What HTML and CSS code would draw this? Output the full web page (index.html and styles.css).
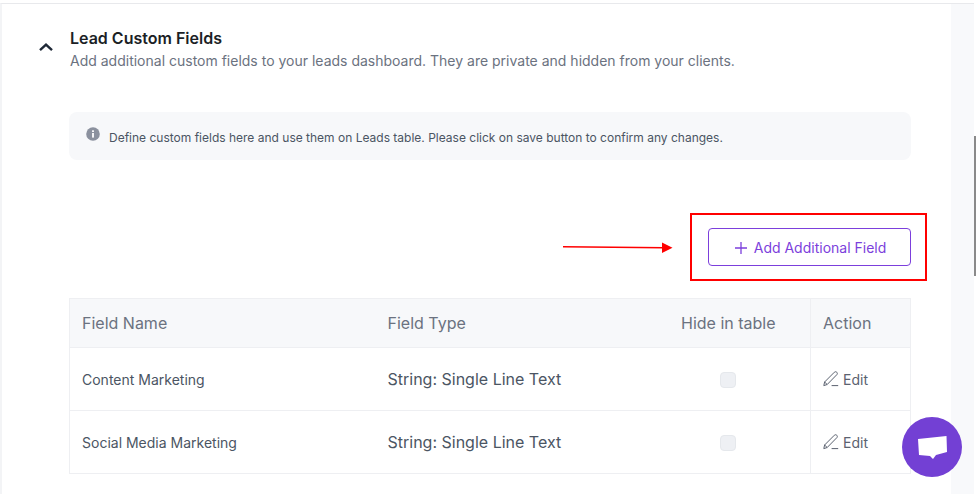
FILE: index.html
```html
<!DOCTYPE html>
<html lang="en">
<head>
    <meta charset="UTF-8">
    <title>Lead Custom Fields</title>
    <link rel="stylesheet" href="styles.css">
</head>
<body>
    <div class="page">
        <main class="panel">
            <header class="section-head">
                <button class="collapse" aria-label="Collapse">
                    <svg width="16" height="10" viewBox="0 0 16 10"><path d="M2 8.2 8 2.6l6 5.6" fill="none" stroke="#1f2937" stroke-width="2.4"/></svg>
                </button>
                <div>
                    <h1>Lead Custom Fields</h1>
                    <p>Add additional custom fields to your leads dashboard. They are private and hidden from your clients.</p>
                </div>
            </header>

            <div class="notice">
                <svg class="info" width="14" height="14" viewBox="0 0 14 14">
                    <circle cx="7" cy="7" r="6.8" fill="#8b919e"/>
                    <rect x="6.1" y="6" width="1.8" height="4.6" fill="#fff"/>
                    <rect x="6.1" y="3.3" width="1.8" height="1.7" fill="#fff"/>
                </svg>
                <span>Define custom fields here and use them on Leads table. Please click on save button to confirm any changes.</span>
            </div>

            <div class="actions">
                <button class="btn-add">
                    <svg width="12" height="12" viewBox="0 0 12 12"><path d="M6 0v12M0 6h12" stroke="#7c3fdc" stroke-width="1.3"/></svg>
                    Add Additional Field
                </button>
            </div>

            <table class="fields">
                <thead>
                    <tr>
                        <th class="col-name">Field Name</th>
                        <th class="col-type">Field Type</th>
                        <th class="col-hide">Hide in table</th>
                        <th class="col-action">Action</th>
                    </tr>
                </thead>
                <tbody>
                    <tr>
                        <td class="col-name">Content Marketing</td>
                        <td class="col-type">String: Single Line Text</td>
                        <td class="col-hide"><span class="check"></span></td>
                        <td class="col-action">
                            <a class="edit">
                                <svg width="16" height="16" viewBox="0 0 16 16"><path d="M.8 14.6 1.6 11 11.4 1.2c.7-.7 1.7-.6 2.4.1s.7 1.6.1 2.3L4.2 13.5.8 14.6ZM1.6 11l2.6 2.5M8.6 14.6h6.6" fill="none" stroke="#5b6270" stroke-width="1"/></svg>
                                Edit
                            </a>
                        </td>
                    </tr>
                    <tr>
                        <td class="col-name">Social Media Marketing</td>
                        <td class="col-type">String: Single Line Text</td>
                        <td class="col-hide"><span class="check"></span></td>
                        <td class="col-action">
                            <a class="edit">
                                <svg width="16" height="16" viewBox="0 0 16 16"><path d="M.8 14.6 1.6 11 11.4 1.2c.7-.7 1.7-.6 2.4.1s.7 1.6.1 2.3L4.2 13.5.8 14.6ZM1.6 11l2.6 2.5M8.6 14.6h6.6" fill="none" stroke="#5b6270" stroke-width="1"/></svg>
                                Edit
                            </a>
                        </td>
                    </tr>
                </tbody>
            </table>
        </main>
        <div class="gutter"></div>
        <div class="scrollbar"><span class="thumb"></span></div>
    </div>

    <!-- annotation drawn over the screenshot -->
    <div class="mark-box"></div>
    <svg class="mark-arrow" width="112" height="14" viewBox="0 0 112 14">
        <path d="M0 5.800 101 6.800" stroke="#f00" stroke-width="1.5"/>
        <path d="M99 1.500 109.500 6.800 99 12Z" fill="#f00"/>
    </svg>

    <button class="chat" aria-label="Open chat">
        <svg width="29" height="23" viewBox="0 0 29 23"><path d="M0 3 28.500 0 29 16 18 19l-3 4-3-3-11-1Z" fill="#fff"/></svg>
    </button>
</body>
</html>
```

FILE: styles.css
```css
* {
    box-sizing: border-box;
}
html, body {
    height: 100%;
}
body {
    margin: 0;
    background-color: #fff;
    font-family: Inter, "Liberation Sans", sans-serif;
    overflow: hidden;
}
.page {
    display: flex;
    height: 494px;
    padding-top: 3px;
    background-color: #fff;
}
.panel {
    width: 951px;
    flex: none;
    border-top: 1px solid #e8e9ec;
    border-left: 2px solid #f3f4f6;
    padding: 24px 40px 0 67px;
}
.gutter {
    flex: 1;
    background-color: #f8f9fb;
    border-top: 1px solid #e8e9ec;
}
.scrollbar {
    width: 2px;
    flex: none;
    background-color: #fff;
    padding-top: 133px;
}
.thumb {
    display: block;
    height: 140px;
    background-color: #8a8a8a;
}
.section-head {
    position: relative;
    height: 84px;
    padding-left: 1px;
}
.collapse {
    position: absolute;
    left: -31px;
    top: 14px;
    padding: 0;
    border: none;
    background: none;
    line-height: 0;
}
h1 {
    margin: 0;
    font-size: 16px;
    line-height: 20px;
    font-weight: 600;
    color: #1c1f26;
}
.section-head p {
    margin: 3px 0 0;
    font-size: 14px;
    line-height: 20px;
    color: #6b7280;
}
.notice {
    display: flex;
    align-items: flex-start;
    gap: 9px;
    height: 48px;
    padding: 15px 17px;
    border-radius: 8px;
    background-color: #f7f8fa;
    font-size: 12px;
    line-height: 22px;
    color: #4b5563;
}
.info {
    flex: none;
}
.actions {
    display: flex;
    justify-content: flex-end;
    margin-top: 68px;
}
.btn-add {
    display: flex;
    align-items: center;
    justify-content: center;
    gap: 7px;
    width: 203px;
    height: 38px;
    padding: 1px 0 0 2px;
    border: 1px solid #7c3fdc;
    border-radius: 4px;
    background-color: #fff;
    color: #7c3fdc;
    font-family: inherit;
    font-size: 14px;
}
.fields {
    width: 842px;
    margin-top: 32px;
    border-collapse: collapse;
    table-layout: fixed;
    border: 1px solid #eeeff2;
}
th, td {
    padding: 0 12px;
    text-align: left;
    font-weight: 400;
}
th {
    height: 49px;
    background-color: #f7f8fa;
    font-size: 16px;
    color: #6b7280;
    border-bottom: 1px solid #eeeff2;
}
td {
    height: 63px;
    font-size: 14px;
    color: #4b5563;
    border-bottom: 1px solid #eeeff2;
}
.col-name {
    width: 306px;
}
.col-type {
    width: 271px;
}
td.col-type {
    font-size: 16px;
    color: #4b5563;
}
.col-hide {
    width: 164px;
    padding: 0;
    text-align: center;
}
.col-action {
    border-left: 1px solid #eeeff2;
}
.check {
    display: inline-block;
    width: 16px;
    height: 16px;
    vertical-align: middle;
    border: 1px solid #e5e8ec;
    border-radius: 4px;
    background-color: #eef0f4;
}
.edit {
    display: flex;
    align-items: center;
    gap: 4px;
    color: #5b6270;
}
.mark-box {
    position: absolute;
    left: 690px;
    top: 213px;
    width: 237px;
    height: 68px;
    border: 2px solid #f00;
}
.mark-arrow {
    position: absolute;
    left: 563px;
    top: 241px;
}
.chat {
    position: absolute;
    left: 902px;
    top: 417px;
    width: 60px;
    height: 60px;
    padding: 1px 0 0;
    border: none;
    border-radius: 50%;
    background-color: #7340d4;
    display: flex;
    align-items: center;
    justify-content: center;
}
```
